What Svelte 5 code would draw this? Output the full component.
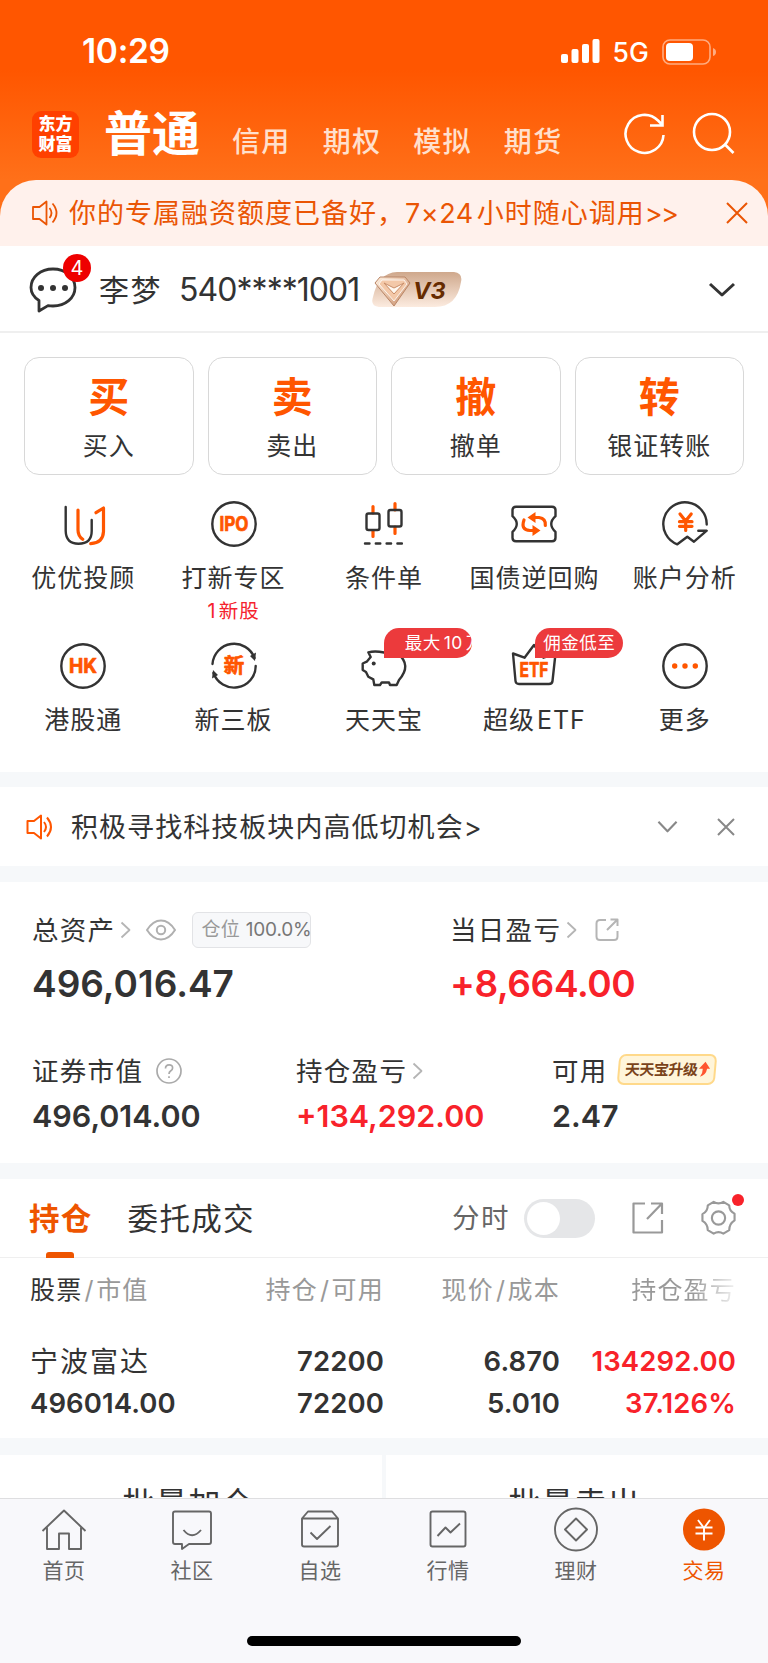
<script>
  const markets = ['信用', '期权', '模拟', '期货'];

  const trades = [
    { mark: '买', label: '买入' },
    { mark: '卖', label: '卖出' },
    { mark: '撤', label: '撤单' },
    { mark: '转', label: '银证转账' }
  ];

  const tools = [
    { id: 'advisor', label: '优优投顾' },
    { id: 'ipo', label: '打新专区', note: '1 新股' },
    { id: 'order', label: '条件单' },
    { id: 'repo', label: '国债逆回购' },
    { id: 'analysis', label: '账户分析' },
    { id: 'hk', label: '港股通' },
    { id: 'neeq', label: '新三板' },
    { id: 'piggy', label: '天天宝', badge: '最大 10 万', scrolling: true },
    { id: 'etf', label: '超级 ETF', badge: '佣金低至' },
    { id: 'more', label: '更多' }
  ];

  const tabs = [
    { id: 'home', label: '首页' },
    { id: 'club', label: '社区' },
    { id: 'watch', label: '自选' },
    { id: 'quote', label: '行情' },
    { id: 'wealth', label: '理财' },
    { id: 'trade', label: '交易' }
  ];

  let activeTab = $state('trade');
  let minute = $state(false);
</script>

{#snippet speaker()}
  <svg class="speaker" viewBox="0 0 28 28">
    <path d="M2 8h6.500l7-5.500v23l-7-5.500H2z" />
    <path d="M18.500 9q4 5 0 10M21.500 4.500q8 9.500 0 19" />
  </svg>
{/snippet}

{#snippet arrow()}
  <svg class="arrow" viewBox="0 0 11 18"><path d="M1.500 1.500l8 7.500-8 7.500" /></svg>
{/snippet}

<div class="page">
  <header>
    <div class="status">
      <span class="time">10:29</span>
      <svg class="signal" viewBox="0 0 39 25">
        <rect x="0" y="15" width="7" height="9" rx="2" />
        <rect x="10.500" y="10" width="7" height="14" rx="2" />
        <rect x="21" y="5" width="7" height="19" rx="2" />
        <rect x="31.500" y="0" width="7" height="24" rx="2" />
      </svg>
      <span class="net">5G</span>
      <svg class="battery" viewBox="0 0 55 26">
        <rect x="1" y="1" width="47" height="24" rx="7" />
        <rect class="level" x="4" y="4" width="27" height="18" rx="4" />
        <path class="nub" d="M51 9q3 1 3 4t-3 4z" />
      </svg>
    </div>
    <div class="nav">
      <div class="logo"><span>东方</span><span>财富</span></div>
      <h1>普通</h1>
      <div class="markets">
        {#each markets as market}
          <span>{market}</span>
        {/each}
      </div>
      <svg class="nav-icon refresh" viewBox="0 0 44 44">
        <path d="M40.500 23A19 19 0 1 1 35 8.500l4 4M39.500 3v10.500H27" />
      </svg>
      <svg class="nav-icon" viewBox="0 0 44 44">
        <circle cx="20" cy="20" r="18" />
        <path d="M33 32.500l8.500 8.500" />
      </svg>
    </div>
  </header>

  <div class="notice">
    {@render speaker()}
    <p>你的专属融资额度已备好，<span class="latin">7×24</span>小时随心调用<span class="more">&gt;&gt;</span></p>
    <svg class="close" viewBox="0 0 22 22"><path d="M1 1l20 20M21 1L1 21" /></svg>
  </div>

  <div class="account">
    <div class="chat">
      <svg viewBox="0 0 50 50">
        <path d="M11 46V35.500C5.500 32 3 27 3 22.500C3 12 12.500 4 25 4s22 8 22 18.500S37.500 41 25 41q-3 0-5-.4z" />
        <circle cx="13" cy="23" r="3" /><circle cx="25" cy="23" r="3" /><circle cx="37" cy="23" r="3" />
      </svg>
      <span>4</span>
    </div>
    <span class="owner">李梦</span>
    <span class="number">540****1001</span>
    <svg class="level-badge" viewBox="0 0 90 36">
      <defs>
        <linearGradient id="tag" x1="0" y1="0" x2="0" y2="1">
          <stop offset="0" stop-color="#cfa88c" />
          <stop offset="1" stop-color="#fcebdf" />
        </linearGradient>
        <linearGradient id="gem" x1="0" y1="0" x2="1" y2="1">
          <stop offset="0" stop-color="#fff0e0" />
          <stop offset="1" stop-color="#c98d68" />
        </linearGradient>
      </defs>
      <path d="M25 0h57q9 1 7 10-4 25-26 25H7q-9-1-6-10Q6 1 25 0z" fill="url(#tag)" />
      <path d="M8 5h25l5 6-16 23L3 11z" fill="url(#gem)" stroke="#b98566" />
      <path d="M10 8h22l3 4-13 17L7 12z" fill="#f3c8a8" stroke="#fff" stroke-width=".8" />
      <path d="M12 11l10 11 10-11-10 5z" fill="#fff8f0" stroke="#c98d68" />
      <text x="41" y="27">V3</text>
    </svg>
    <svg class="expand" viewBox="0 0 28 16"><path d="M2 2l12 11L26 2" /></svg>
  </div>

  <div class="trades">
    {#each trades as trade}
      <button>
        <strong>{trade.mark}</strong>
        <span>{trade.label}</span>
      </button>
    {/each}
  </div>

  <div class="tools">
    {#each tools as tool (tool.id)}
      <div class="tool">
        <svg viewBox="0 0 48 48">
          {#if tool.id === 'advisor'}
            <path d="M6.700 7V31Q7 43.700 19.500 43.700Q32.700 43.700 32.700 31V20" />
            <path class="hot" d="M19 10v20q0 6 4.700 9.300M37 12.700L44.500 8v23.500Q44 43 31.700 43.700" />
          {:else if tool.id === 'ipo'}
            <circle cx="24" cy="24" r="21.700" />
            <text x="24" y="31" textLength="29" lengthAdjust="spacingAndGlyphs">IPO</text>
          {:else if tool.id === 'order'}
            <path class="hot" d="M13 6.500V13M13 31v5.500M35 3.500V10M35 27v6.500" />
            <rect x="6.500" y="13.500" width="13" height="16.500" rx="2" />
            <rect x="28.500" y="10" width="13" height="16.500" rx="2" />
            <path stroke-dasharray="4.500 6.300" d="M5 43.500h40" />
          {:else if tool.id === 'repo'}
            <path d="M6 6.700h36q3.500 0 3.500 3.500v6Q37 24 45.500 31.800v6q0 3.500-3.500 3.500H6q-3.500 0-3.500-3.500v-6Q11 24 2.500 16.200v-6Q2.500 6.700 6 6.700z" />
            <path class="hot" d="M25 17.500h4q7 1 6.300 8M14 20Q10.500 30 20 30.500h3" />
            <path class="fill" d="M17.500 17.500l8-5.500v11zM30.500 30.500l-8-5.500v11z" />
          {:else if tool.id === 'analysis'}
            <path d="M45.700 24.500A21.700 21.700 0 1 0 16.300 44.300l10-7.600 6.700 5L45.700 30.700h-8.400" />
            <path class="hot" d="M19 14l5.600 7 5.600-7M18.500 21.700h12.500M18.500 26.300h12.500M24.700 21v9.500" />
          {:else if tool.id === 'hk'}
            <circle cx="24" cy="24" r="21.700" />
            <text x="24" y="31" textLength="28" lengthAdjust="spacingAndGlyphs">HK</text>
          {:else if tool.id === 'neeq'}
            <path d="M2.500 22A21.700 21.700 0 0 1 44.500 16M45.700 24A21.700 21.700 0 0 1 3.500 31" />
            <path class="dark" d="M40 14l5 5 1-8.500zM8 33l-5-5-1 8.500z" />
            <text class="cjk" x="24" y="31">新</text>
          {:else if tool.id === 'piggy'}
            <path d="M24 10.500Q15 8.500 8.300 10.300L10.700 15 6.700 19.700 2.700 21.500V28L6 30l2.300 4.700 5 2.700 1 5.600H20l1.700-2.500H29L30 43h6.700l2.300-5Q52 23 38 12Q32 9 24 10.500z" />
            <circle class="dark" cx="13.700" cy="21.500" r="2" />
          {:else if tool.id === 'etf'}
            <path d="M3 11.500L14.500 15.700 24 3l9.500 12.700 12-4.200L42.500 39q-.3 3-3.500 3H9q-3.200 0-3.500-3z" />
            <text x="24" y="35" textLength="29" lengthAdjust="spacingAndGlyphs">ETF</text>
          {:else}
            <circle cx="24" cy="24" r="21.700" />
            <path class="fill" d="M11 24a2.700 2.700 0 1 0 5.400 0a2.700 2.700 0 1 0-5.400 0M21.300 24a2.700 2.700 0 1 0 5.400 0a2.700 2.700 0 1 0-5.400 0M31.600 24a2.700 2.700 0 1 0 5.400 0a2.700 2.700 0 1 0-5.400 0" />
          {/if}
        </svg>
        <span class="name">{tool.label}</span>
        {#if tool.note}
          <span class="note">{tool.note}</span>
        {/if}
        {#if tool.badge}
          <span class="badge" class:scrolling={tool.scrolling}>{tool.badge}</span>
        {/if}
      </div>
    {/each}
  </div>

  <div class="news">
    {@render speaker()}
    <p>积极寻找科技板块内高低切机会&gt;</p>
    <svg class="fold" viewBox="0 0 22 14"><path d="M1.500 1.500L11 11.500l9.500-10" /></svg>
    <svg class="dismiss" viewBox="0 0 18 18"><path d="M1 1l16 16M17 1L1 17" /></svg>
  </div>

  <section class="assets">
    <div class="row main">
      <div>
        <div class="title">
          总资产{@render arrow()}
          <svg class="eye" viewBox="0 0 30 22">
            <path d="M1 11Q7 1.500 15 1.500T29 11Q23 20.500 15 20.500T1 11z" />
            <circle cx="15" cy="11" r="4.200" />
          </svg>
          <span class="chip">仓位 <b>100.0%</b></span>
        </div>
        <div class="value">496,016.47</div>
      </div>
      <div>
        <div class="title">
          当日盈亏{@render arrow()}
          <svg class="share" viewBox="0 0 24 24">
            <path d="M11 2H5Q1.500 2 1.500 5.500v13Q1.500 22 5 22h14q3.500 0 3.500-3.500V13M15.500 1.500h7V8M22 2L12 12" />
          </svg>
        </div>
        <div class="value up">+8,664.00</div>
      </div>
    </div>
    <div class="row sub">
      <div>
        <div class="title">
          证券市值
          <svg class="help" viewBox="0 0 26 26">
            <circle cx="13" cy="13" r="12" />
            <path d="M9.500 10.500q0-3.700 3.600-3.700t3.500 3.200q0 1.600-2 3-1.600 1.100-1.600 3M13 18.300v1.700" />
          </svg>
        </div>
        <div class="value">496,014.00</div>
      </div>
      <div>
        <div class="title">持仓盈亏{@render arrow()}</div>
        <div class="value up">+134,292.00</div>
      </div>
      <div>
        <div class="title">
          可用
          <span class="upgrade">
            天天宝升级
            <svg viewBox="0 0 14 18"><path d="M8 0l6 8h-3.500Q10 15 3 17.500 6 13 5.500 8H1z" /></svg>
          </span>
        </div>
        <div class="value">2.47</div>
      </div>
    </div>
  </section>

  <section class="positions">
    <div class="bar">
      <span class="tab current">持仓</span>
      <span class="tab">委托成交</span>
      <span class="minute">分时</span>
      <button class="switch" class:on={minute} aria-label="分时" onclick={() => (minute = !minute)}></button>
      <svg class="export" viewBox="0 0 32 32">
        <path d="M13 1.500H1.500v29h28.500V18M19 1.500h11V12M29.500 2L15 17" />
      </svg>
      <div class="settings">
        <svg viewBox="0 0 38 38">
          <path d="M14 2.500q5 3 10 0l6 3.500q0 6 5.500 8.500v7Q30 25 30 31.500L24 35q-5-3-10 0l-6-3.500Q8 25 2.500 22v-7Q8 12.500 8 6z" />
          <circle cx="19" cy="19" r="6.800" />
        </svg>
      </div>
    </div>
    <div class="table">
      <div class="line head">
        <span><em>股票</em><i>/</i>市值</span>
        <span>持仓<i>/</i>可用</span>
        <span>现价<i>/</i>成本</span>
        <span class="fade">持仓盈亏</span>
      </div>
      <div class="line">
        <span class="stock">宁波富达</span><span>72200</span><span>6.870</span><span class="up">134292.00</span>
      </div>
      <div class="line">
        <span>496014.00</span><span>72200</span><span>5.010</span><span class="up">37.126%</span>
      </div>
    </div>
  </section>

  <div class="bulk">
    <div>批量加仓</div>
    <div>批量卖出</div>
  </div>

  <footer>
    <nav>
      {#each tabs as tab (tab.id)}
        <button class:active={activeTab === tab.id} onclick={() => (activeTab = tab.id)}>
          <svg viewBox="0 0 46 46">
            {#if tab.id === 'home'}
              <path d="M1.500 24L23 3.500 44.500 24M6 20.500V42h12V26.500h10V42h12V20.500" />
            {:else if tab.id === 'club'}
              <path d="M6 4.500h34q2 0 2 2V35q0 2-2 2H20l-7 5v-5H6q-2 0-2-2V6.500q0-2 2-2zM14.500 23q8.500 10.500 17.500 0" />
            {:else if tab.id === 'watch'}
              <path d="M5 11.500h36V37.500q0 2-2 2H7q-2 0-2-2zM5 11.500l6-7h24l6 7M13.500 25.500l6.500 6.500 13.500-13" />
            {:else if tab.id === 'quote'}
              <rect x="5.500" y="4.500" width="35" height="35" rx="2" />
              <path d="M12.500 29l8-8.500 5 5 9.500-9" />
            {:else if tab.id === 'wealth'}
              <circle cx="23" cy="22.500" r="21" />
              <path d="M23 11.500l11 11-11 11-11-11z" />
            {:else}
              <circle class="disc" cx="23" cy="22.500" r="21" />
              <path class="yen" d="M17 13l6 8 6-8M14.500 20.500h17M14.500 26.500h17M23 20.500v13" />
            {/if}
          </svg>
          <span>{tab.label}</span>
        </button>
      {/each}
    </nav>
    <div class="indicator"></div>
  </footer>
</div>

<style>
  :global(body) {
    background: #fff;
  }

  .page {
    width: 768px;
    height: 1663px;
    overflow: hidden;
    display: flex;
    flex-direction: column;
    background: #fff;
    color: #333;
    font-family: Inter, "Noto Sans CJK SC", sans-serif;
    line-height: 1;
  }

  * {
    box-sizing: border-box;
  }

  p, h1 {
    margin: 0;
  }

  svg {
    display: block;
    flex: none;
    fill: none;
    stroke: currentColor;
    stroke-linejoin: round;
  }

  button {
    border: none;
    padding: 0;
    background: none;
    color: inherit;
    font: inherit;
  }

  span, p {
    white-space: nowrap;
  }

  /* HEADER */
  header {
    height: 216px;
    flex: none;
    background: linear-gradient(#ff5600 70px, #ff7019 180px);
    color: #fff;
  }

  .status {
    height: 102px;
    padding: 1px 51px 0 82px;
    display: flex;
    align-items: center;
  }

  .time {
    margin: 1px auto 0 0;
    font-size: 33.500px;
    font-weight: 600;
    letter-spacing: -0.3px;
  }

  .signal {
    width: 39px;
    height: 25px;
    fill: #fff;
    stroke: none;
  }

  .net {
    font-size: 26.500px;
    font-weight: 500;
    letter-spacing: 0.2px;
    margin: 2px 13px 0 12px;
  }

  .battery {
    width: 55px;
    height: 26px;
    stroke: #ffac80;
    stroke-width: 1.6;
  }

  .level {
    fill: #fff;
    stroke: none;
  }

  .nub {
    fill: #ffac80;
    stroke: none;
  }

  .nav {
    height: 64px;
    padding: 0 32px;
    display: flex;
    align-items: center;
  }

  .logo {
    width: 47px;
    height: 47px;
    border-radius: 9px;
    background: #ff4000;
    font-size: 17px;
    font-weight: 900;
    display: flex;
    flex-direction: column;
    align-items: center;
    justify-content: center;
    gap: 3px;
  }

  h1 {
    font-size: 48px;
    font-weight: 700;
    margin-left: 25px;
  }

  .markets {
    display: flex;
    gap: 32px;
    margin: 15px auto 0 32px;
    font-size: 28px;
    font-weight: 500;
    letter-spacing: 1.300px;
    color: #ffe0cd;
  }

  .nav-icon {
    width: 44px;
    height: 44px;
    stroke-width: 2.6;
    stroke-linejoin: miter;
  }

  .refresh {
    margin-right: 25px;
  }

  /* NOTICE */
  .notice {
    height: 66px;
    flex: none;
    margin-top: -36px;
    padding: 0 20px 0 31px;
    border-radius: 36px 36px 0 0;
    background: #fff1ec;
    color: #ea5504;
    display: flex;
    align-items: center;
  }

  .speaker {
    width: 28px;
    height: 28px;
    stroke-width: 1.8;
  }

  .notice p {
    margin: 0 auto 0 10px;
    font-size: 27px;
    letter-spacing: 1px;
  }

  .latin {
    margin-right: 3px;
    letter-spacing: 0.500px;
  }

  .more {
    letter-spacing: -1.500px;
  }

  .close {
    width: 22px;
    height: 22px;
    stroke-width: 2;
  }

  /* ACCOUNT */
  .account {
    height: 87px;
    flex: none;
    padding: 2px 32px 0 28px;
    border-bottom: 2px solid #efefef;
    display: flex;
    align-items: center;
  }

  .chat {
    position: relative;
    width: 50px;
    height: 50px;
  }

  .chat svg {
    width: 50px;
    height: 50px;
    stroke-width: 2.8;
  }

  .chat circle {
    fill: #333;
    stroke: none;
  }

  .chat span {
    position: absolute;
    left: 35px;
    top: -11px;
    width: 28px;
    height: 28px;
    border-radius: 50%;
    background: #ee0000;
    color: #fff;
    font-size: 20px;
    line-height: 28px;
    text-align: center;
  }

  .owner {
    font-size: 30px;
    letter-spacing: 1.500px;
    margin-left: 21px;
  }

  .number {
    font-size: 32px;
    letter-spacing: -0.950px;
    margin: 1px 0 0 17px;
  }

  .level-badge {
    width: 90px;
    height: 36px;
    margin-left: 13px;
    stroke: none;
  }

  .level-badge text {
    font-size: 23.500px;
    font-weight: 700;
    font-style: italic;
    fill: #662b00;
  }

  .expand {
    width: 28px;
    height: 16px;
    margin-left: auto;
    stroke-width: 3;
  }

  /* TRADE BUTTONS */
  .trades {
    padding: 24px 24px 0;
    display: grid;
    grid-template-columns: repeat(4, 1fr);
    gap: 14px;
  }

  .trades button {
    height: 118px;
    padding-top: 4px;
    border: 1.5px solid #d8d8d8;
    border-radius: 15px;
    display: flex;
    flex-direction: column;
    align-items: center;
    justify-content: center;
    gap: 17px;
  }

  .trades strong {
    font-size: 41px;
    font-weight: 700;
    line-height: 40px;
    color: #ff5600;
  }

  .trades span {
    font-size: 25px;
    letter-spacing: 1px;
  }

  /* TOOLS */
  .tools {
    padding: 25px 8px 0;
    height: 297px;
    flex: none;
    display: grid;
    grid-template-columns: repeat(5, 1fr);
    grid-auto-rows: 142px;
  }

  .tool {
    position: relative;
    display: flex;
    flex-direction: column;
    align-items: center;
  }

  .tool svg {
    width: 48px;
    height: 48px;
    stroke-width: 2.4;
    stroke-linecap: round;
  }

  .tool .hot {
    stroke: #ff5600;
    stroke-width: 3.2;
  }

  .tool .fill {
    fill: #ff5600;
    stroke: none;
  }

  .tool .dark {
    fill: #333;
    stroke: none;
  }

  .tool text {
    fill: #ff5600;
    stroke: #ff5600;
    stroke-width: 0.7;
    font-size: 19.500px;
    font-weight: 700;
    text-anchor: middle;
  }

  .tool .cjk {
    font-size: 20.500px;
  }

  .name {
    margin-top: 18px;
    font-size: 25px;
    letter-spacing: 1px;
    word-spacing: -6px;
  }

  .note {
    margin-top: 11px;
    font-size: 19.500px;
    letter-spacing: 1px;
    word-spacing: -4px;
    color: #f5222d;
  }

  .badge {
    position: absolute;
    left: 76px;
    top: -14px;
    width: 88px;
    height: 30px;
    overflow: hidden;
    padding-left: 8px;
    border-radius: 15px 15px 15px 0;
    background: #ec3a3c;
    color: #fff;
    font-size: 17.500px;
    letter-spacing: 0.500px;
    word-spacing: -2.500px;
    line-height: 30px;
  }

  .scrolling {
    left: 75px;
    padding-left: 21px;
  }

  /* NEWS */
  .news {
    height: 110px;
    flex: none;
    border: solid #f6f8fa;
    border-width: 15px 0 16px;
    padding: 0 33px 0 25px;
    display: flex;
    align-items: center;
  }

  .news .speaker {
    width: 29px;
    color: #ff5600;
    stroke-width: 2;
  }

  .news p {
    margin: 2px auto 0 17px;
    font-size: 27px;
    letter-spacing: 1.050px;
  }

  .fold {
    width: 21px;
    height: 14px;
    margin-right: 39px;
    color: #888;
    stroke-width: 2.2;
  }

  .dismiss {
    width: 18px;
    height: 18px;
    color: #888;
    stroke-width: 2;
  }

  /* ASSETS */
  .assets {
    height: 297px;
    flex: none;
    padding: 30px 32px 0;
    border-bottom: 16px solid #f6f8fa;
  }

  .row {
    display: grid;
  }

  .main {
    grid-template-columns: 418px 1fr;
    height: 141px;
  }

  .sub {
    grid-template-columns: 264px 256px 1fr;
  }

  .title {
    height: 36px;
    display: flex;
    align-items: center;
    font-size: 26.500px;
    letter-spacing: 1.300px;
    white-space: nowrap;
  }

  .arrow {
    width: 11px;
    height: 18px;
    margin-left: 5px;
    color: #b5b5b5;
    stroke-width: 1.8;
  }

  .eye {
    width: 30px;
    height: 22px;
    margin-left: 15px;
    color: #b0b0b0;
    stroke-width: 2;
  }

  .chip {
    width: 119px;
    height: 36px;
    margin-left: 16px;
    padding-left: 8px;
    border: 1.5px solid #e2e3e6;
    border-radius: 6px;
    background: #f7f8fa;
    color: #999;
    font-size: 19px;
    line-height: 33px;
    letter-spacing: 0.300px;
  }

  .chip b {
    font-weight: 400;
    color: #777;
    letter-spacing: -0.150px;
  }

  .value {
    font-weight: 600;
  }

  .main .value {
    margin-top: 17px;
    font-size: 37px;
  }

  .main .up {
    letter-spacing: -0.400px;
  }

  .sub .value {
    margin-top: 12px;
    font-size: 30.500px;
  }

  .up {
    color: #f8222a;
  }

  .share {
    width: 24px;
    height: 24px;
    margin-left: 18px;
    color: #b5b5b5;
    stroke-width: 2;
  }

  .help {
    width: 26px;
    height: 26px;
    margin-left: 13px;
    color: #aaa;
    stroke-width: 1.7;
  }

  .upgrade {
    width: 98px;
    height: 31px;
    margin: -3px 0 0 10px;
    padding: 0 4px 0 5px;
    display: flex;
    align-items: center;
    justify-content: space-between;
    border: 2px solid #ffd98a;
    border-radius: 7px;
    background: #fff5da;
    transform: skewX(-5deg);
    color: #7a431b;
    font-size: 15px;
    font-weight: 700;
    letter-spacing: -0.500px;
  }

  .upgrade svg {
    width: 12px;
    height: 17px;
    fill: #ff5530;
    stroke: none;
  }

  /* POSITIONS */
  .bar {
    height: 79px;
    padding: 0 31px 0 29px;
    border-bottom: 1.5px solid #efefef;
    display: flex;
    align-items: center;
  }

  .tab {
    position: relative;
    height: 100%;
    font-size: 30.500px;
    line-height: 79px;
    letter-spacing: 1.300px;
    margin-right: 35px;
  }

  .current {
    font-weight: 700;
    color: #ee5500;
  }

  .current::after {
    content: "";
    position: absolute;
    left: 17px;
    bottom: -1px;
    width: 28px;
    height: 6px;
    border-radius: 3px 3px 0 0;
    background: #ee5500;
  }

  .minute {
    margin: 1px 0 0 auto;
    font-size: 27.500px;
    letter-spacing: 1.500px;
    color: #666;
  }

  .switch {
    width: 71px;
    height: 39px;
    margin: 0 37px 0 14px;
    padding: 3px;
    border-radius: 20px;
    background: #e5e6e8;
    display: flex;
  }

  .switch::before {
    content: "";
    width: 33px;
    height: 33px;
    border-radius: 50%;
    background: #fff;
  }

  .switch.on {
    justify-content: flex-end;
    background: #ee5500;
  }

  .export {
    width: 32px;
    height: 32px;
    margin-right: 36px;
    color: #999;
    stroke-width: 2.2;
  }

  .settings {
    position: relative;
    color: #999;
  }

  .settings svg {
    width: 37px;
    height: 38px;
    stroke-width: 2.2;
  }

  .settings::after {
    content: "";
    position: absolute;
    right: -7px;
    top: -5px;
    width: 12px;
    height: 12px;
    border-radius: 50%;
    background: #f8222a;
  }

  .table {
    height: 180px;
    padding-top: 11px;
  }

  .line {
    display: grid;
    grid-template-columns: 200px 154px 176px 176px;
    padding-left: 30px;
    height: 42px;
    align-items: center;
    text-align: right;
    font-size: 27.500px;
    font-weight: 600;
    letter-spacing: 0.100px;
  }

  .line > :first-child {
    text-align: left;
  }

  .head {
    margin-bottom: 30px;
    font-size: 25px;
    font-weight: 400;
    letter-spacing: 1.200px;
    color: #999;
  }

  .head em {
    font-style: normal;
    color: #333;
  }

  .head i {
    font-style: normal;
    margin: 0 1.500px 0 2px;
  }

  .fade {
    background: linear-gradient(90deg, #999 75%, #f2f2f2 100%);
    background-clip: text;
    color: transparent;
  }

  .stock {
    font-size: 28px;
    font-weight: 400;
    letter-spacing: 2px;
  }

  /* BULK ACTIONS, CUT BY THE TAB BAR */
  .bulk {
    height: 60px;
    flex: none;
    overflow: hidden;
    border-top: 17px solid #f6f8fa;
    background: #f6f8fa;
    display: grid;
    grid-template-columns: 1fr 1fr;
    gap: 4px;
  }

  .bulk div {
    padding: 33px 5px 0 0;
    background: #fff;
    font-size: 32px;
    letter-spacing: 1px;
    text-align: center;
  }

  /* TAB BAR */
  footer {
    height: 165px;
    flex: none;
    border-top: 1.500px solid #dedee0;
    background: #f8f8fb;
  }

  nav {
    height: 137px;
    padding-top: 8px;
    display: grid;
    grid-template-columns: repeat(6, 1fr);
    align-items: start;
    color: #666;
  }

  nav button {
    display: flex;
    flex-direction: column;
    align-items: center;
    gap: 7px;
    font-size: 21px;
    letter-spacing: 0.500px;
  }

  nav svg {
    width: 46px;
    height: 46px;
    stroke-width: 1.9;
  }

  .active {
    color: #ee5500;
  }

  .disc {
    fill: #ee5500;
    stroke: none;
  }

  .yen {
    stroke: #fff;
  }

  .indicator {
    width: 274px;
    height: 10px;
    margin: 0 auto;
    border-radius: 5px;
    background: #000;
  }
</style>
